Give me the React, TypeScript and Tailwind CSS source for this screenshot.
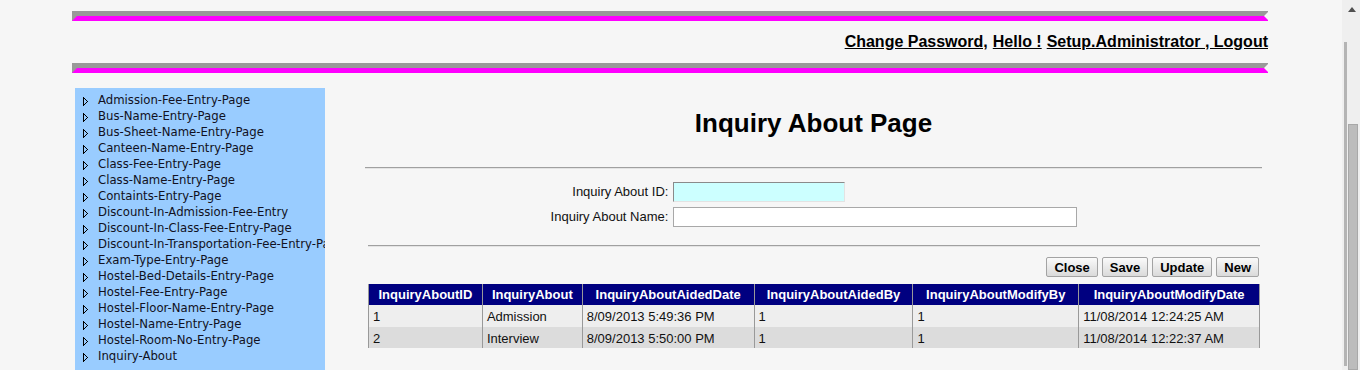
const menuItems = [
  "Admission-Fee-Entry-Page",
  "Bus-Name-Entry-Page",
  "Bus-Sheet-Name-Entry-Page",
  "Canteen-Name-Entry-Page",
  "Class-Fee-Entry-Page",
  "Class-Name-Entry-Page",
  "Containts-Entry-Page",
  "Discount-In-Admission-Fee-Entry",
  "Discount-In-Class-Fee-Entry-Page",
  "Discount-In-Transportation-Fee-Entry-Page",
  "Exam-Type-Entry-Page",
  "Hostel-Bed-Details-Entry-Page",
  "Hostel-Fee-Entry-Page",
  "Hostel-Floor-Name-Entry-Page",
  "Hostel-Name-Entry-Page",
  "Hostel-Room-No-Entry-Page",
  "Inquiry-About",
];

const columns = [
  { title: "InquiryAboutID", width: "w-[114px]" },
  { title: "InquiryAbout", width: "w-[100px]" },
  { title: "InquiryAboutAidedDate", width: "w-[172px]" },
  { title: "InquiryAboutAidedBy", width: "w-[159px]" },
  { title: "InquiryAboutModifyBy", width: "w-[166px]" },
  { title: "InquiryAboutModifyDate", width: "w-[181px]" },
];

const rows = [
  ["1", "Admission", "8/09/2013 5:49:36 PM", "1", "1", "11/08/2014 12:24:25 AM"],
  ["2", "Interview", "8/09/2013 5:50:00 PM", "1", "1", "11/08/2014 12:22:37 AM"],
];

function StripeBar() {
  return (
    <div className="flex h-[10px] w-[1196px]">
      {/* left end: magenta cut on a slant */}
      <svg width="6" height="10" className="shrink-0">
        <rect x="0" y="0" width="6" height="10" fill="#999999" />
        <polygon points="0,10 5,5 6,5 6,10" fill="#ff00ff" />
      </svg>
      <div className="flex flex-1 flex-col">
        <div className="h-[5px] bg-[#999999]" />
        <div className="h-[5px] bg-[#ff00ff]" />
      </div>
      {/* right end: small notch */}
      <svg width="6" height="10" className="shrink-0">
        <rect x="0" y="0" width="6" height="5" fill="#999999" />
        <rect x="0" y="5" width="6" height="5" fill="#ff00ff" />
        <polygon points="6,1 2,5 6,9" fill="#f6f6f6" />
      </svg>
    </div>
  );
}

function Arrow() {
  return (
    <svg width="7" height="11" viewBox="0 0 7 11" className="shrink-0" shapeRendering="crispEdges">
      <path d="M1.5 1.5 V9.5 M1.5 1.5 L5.5 5.5 L1.5 9.5" fill="none" stroke="#000" strokeWidth="1" />
    </svg>
  );
}

function Btn({ label }: { label: string }) {
  return (
    <button className="h-[20px] rounded-[2px] border border-[#a3a3a3] bg-gradient-to-b from-[#fafafa] to-[#dadada] px-[7px] text-[13px] font-bold leading-none text-black">
      {label}
    </button>
  );
}

export default function App() {
  return (
    <div className="flex h-[370px] w-[1360px] overflow-hidden bg-[#f6f6f6] font-['Liberation_Sans',Arial,sans-serif]">
      <div className="flex-1">
        <div className="ml-[72px] w-[1196px]">
          <div className="mt-[11px]">
            <StripeBar />
          </div>
          <div className="flex h-[42px] items-center justify-end gap-[5px] pb-[1px] text-[16px] font-bold text-black">
            <a className="underline">Change Password,</a>
            <a className="underline">Hello !</a>
            <a className="underline">Setup.Administrator , Logout</a>
          </div>
          <StripeBar />

          <div className="mt-[15px] flex">
            {/* side menu */}
            <div className="ml-[3px] h-[282px] w-[250px] overflow-hidden bg-[#99ccff] pt-[5px] pl-[7px] font-['DejaVu_Sans',Verdana,sans-serif] text-[11.7px] text-[#111122]">
              {menuItems.map((item) => (
                <div key={item} className="flex h-[16px] items-center gap-[9px] whitespace-nowrap">
                  <Arrow />
                  <span>{item}</span>
                </div>
              ))}
            </div>

            {/* main content */}
            <div className="flex-1 pl-[40px] pr-[6px]">
              <h1 className="mt-[19px] text-center text-[26px] font-bold leading-[32px] text-black">
                Inquiry About Page
              </h1>
              <div className="mt-[28px] border-t border-b border-t-[#a0a0a0] border-b-[#e4e4e4]" />

              <div className="mx-auto mt-[13px] grid w-fit grid-cols-[auto_404px] items-center gap-x-[5px] gap-y-[5px] pl-[1px] text-[13px] text-[#111]">
                <label className="text-right">Inquiry About ID:</label>
                <input
                  className="h-[20px] w-[172px] border border-t-[#8a8a8a] border-l-[#8a8a8a] border-r-[#e3e3e3] border-b-[#e3e3e3] bg-[#ccffff]"
                  readOnly
                />
                <label className="text-right">Inquiry About Name:</label>
                <input className="h-[20px] w-[404px] border border-[#a8a8a8] bg-white" readOnly />
              </div>

              <div className="mt-[18px] ml-[3px] mr-[2px] border-t border-b border-t-[#a0a0a0] border-b-[#e4e4e4]" />

              <div className="mt-[10px] mr-[3px] flex justify-end gap-[4px]">
                <Btn label="Close" />
                <Btn label="Save" />
                <Btn label="Update" />
                <Btn label="New" />
              </div>

              <table className="mt-[7px] ml-[3px] w-[892px] border-collapse text-[13px]">
                <thead>
                  <tr className="h-[21px] bg-[#000080] text-white">
                    {columns.map((c) => (
                      <th key={c.title} className={`${c.width} border-x border-[#999999] px-[4px] text-center font-bold`}>
                        {c.title}
                      </th>
                    ))}
                  </tr>
                </thead>
                <tbody>
                  {rows.map((r, i) => (
                    <tr key={i} className={i === 0 ? "h-[21px] bg-[#eeeeee]" : "h-[21px] bg-[#dcdcdc]"}>
                      {r.map((cell, j) => (
                        <td key={j} className="border-x border-[#999999] px-[4px] pt-[2px] text-[#111]">
                          {cell}
                        </td>
                      ))}
                    </tr>
                  ))}
                </tbody>
              </table>
            </div>
          </div>
        </div>
      </div>

      {/* window scrollbar */}
      <div className="relative w-[18px] bg-[#efefef]">
        <svg width="8" height="5" className="absolute top-[7px] left-[6px]">
          <polygon points="0,5 4,0 8,5" fill="#505050" />
        </svg>
        <div className="absolute top-[42px] left-[2px] h-[324px] w-[3px] bg-[#b4b4b4]" />
        <div className="absolute top-[124px] left-[6px] h-[246px] w-[10px] border border-[#a8a8a8] bg-[#bcbcbc]" />
      </div>
    </div>
  );
}
